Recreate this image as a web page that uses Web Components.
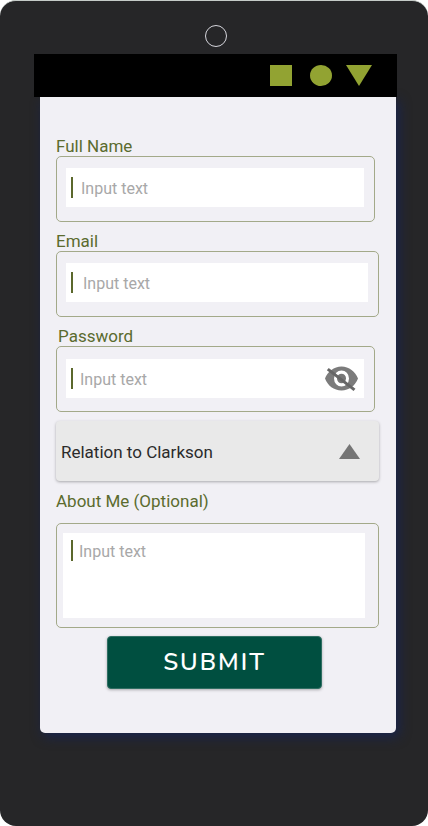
<!DOCTYPE html>
<html lang="en">
<head>
<meta charset="utf-8">
<meta name="viewport" content="width=device-width, initial-scale=1">
<title>Clarkson sign-up</title>
<style>
  html { background: #fff; }
  body { margin: 0; font-family: Roboto, "Liberation Sans", sans-serif; font-size: 16px; }
</style>
</head>
<body>
<device-frame>
  <status-bar slot="status"></status-bar>
  <signup-form>
    <text-field label="Full Name" name="name" class="narrow"></text-field>
    <text-field label="Email" name="email" type="email" class="roomy"></text-field>
    <text-field label="Password" name="password" type="password" class="narrow snug"></text-field>
    <relation-select label="Relation to Clarkson"></relation-select>
    <about-field label="About Me (Optional)"></about-field>
    <submit-button>SUBMIT</submit-button>
  </signup-form>
</device-frame>
<script>
const define = (name, html, setup) => customElements.define(name, class extends HTMLElement {
  connectedCallback() {
    if (this.shadowRoot) return;
    const root = this.attachShadow({ mode: 'open' });
    const t = document.createElement('template');
    t.innerHTML = html;
    root.append(t.content.cloneNode(true));
    if (setup) setup(this, root);
  }
});

define('device-frame', `
<style>
  :host { display: flex; flex-direction: column; box-sizing: border-box; min-height: 100vh;
    padding: 24px 31px 93px 34px; background: #262628; border-radius: 16px; border-top: 1px solid #c5cbc8; }
  .camera { box-sizing: border-box; width: 22px; height: 22px; margin: 0 auto 7px; border: 1px solid #d5d5dc; border-radius: 50%; }
  .screen { flex: 1; display: flex; flex-direction: column; margin: 0 1px 0 6px; background: #f1f0f5;
    border-radius: 0 0 5px 5px; box-shadow: 3px 4px 12px 0 #19244d; }
  ::slotted([slot=status]) { position: relative; }
</style>
<div class="camera"></div>
<slot name="status"></slot>
<div class="screen"><slot></slot></div>`);

define('status-bar', `
<style>
  :host { display: flex; align-items: center; justify-content: flex-end; height: 43px; padding-right: 25px; background: #000; }
  svg { display: block; fill: #92a332; }
  .round { margin: 0 14px 0 18px; }
</style>
<svg width="22" height="21" viewBox="0 0 22 21"><rect width="22" height="21"/></svg>
<svg class="round" width="22" height="21" viewBox="0 0 22 21"><ellipse cx="11" cy="10.5" rx="11" ry="10.5"/></svg>
<svg width="26" height="21" viewBox="0 0 26 21"><path d="M0 0H26L13 21Z"/></svg>`);

define('signup-form', `
<style>
  :host { display: block; }
  form { display: flex; flex-direction: column; padding: 39px 17px 44px 16px; }
  ::slotted(text-field) { margin-bottom: 9px; }
  ::slotted(.narrow) { margin-right: 4px; }
  ::slotted(.roomy) { --lead: 10px; }
  ::slotted(.snug) { --lead: 7px; --label-inset: 2px; --above: 12px; --below: 13px; }
</style>
<form><slot></slot></form>`);

const fieldStyle = `
  :host { display: block; }
  label { display: block; font-size: 17px; line-height: 20px; padding-left: var(--label-inset, 0); color: #5b6b2e; }
  .outline { border: 1px solid #a3a989; border-radius: 5px; }
  .box { display: flex; background: #fff; }
  .caret { flex: none; width: 2px; height: 21px; background: #5b682c; }
  input, textarea { flex: 1; min-width: 0; box-sizing: border-box; margin: 0; border: 0; outline: 0; background: none;
    font: inherit; color: #333; }
  ::placeholder { color: #a8a8a8; opacity: 1; }`;

define('text-field', `
<style>${fieldStyle}
  .outline { padding: var(--above, 11px) 10px var(--below, 14px) 9px; }
  .box { align-items: center; height: 39px; padding: 0 6px 0 5px; }
  input { height: 39px; padding: 2px 0 0 var(--lead, 8px); }
  button { flex: none; padding: 0; border: 0; background: none; cursor: pointer; }
  svg { display: block; }
</style>
<label for="field"></label>
<div class="outline"><div class="box"><span class="caret"></span><input id="field" placeholder="Input text"></div></div>`,
(host, root) => {
  const input = root.querySelector('input');
  root.querySelector('label').textContent = host.getAttribute('label');
  input.type = host.getAttribute('type') || 'text';
  input.name = host.getAttribute('name');
  if (input.type !== 'password') return;
  const eye = document.createElement('button');
  eye.type = 'button';
  eye.setAttribute('aria-label', 'Show password');
  eye.innerHTML = `<svg width="33" height="25" viewBox="0 0 33 26" preserveAspectRatio="none">
    <path fill="#7b7b7b" fill-rule="evenodd" d="M16.5 .5C9 .5 2.6 5.7 0 13c2.6 7.3 9 12.5 16.5 12.5S30.4 20.3 33 13C30.4 5.7 24 .5 16.5 .5Zm0 20.8a7.5 8.3 0 1 1 0-16.6a7.5 8.3 0 0 1 0 16.6Z"/>
    <ellipse cx="16.5" cy="13" rx="4.5" ry="5" fill="#777"/>
    <path d="M2.8 3.3L29.5 24.8" stroke="#666" stroke-width="3"/></svg>`;
  eye.onclick = () => { input.type = input.type === 'password' ? 'text' : 'password'; };
  root.querySelector('.box').append(eye);
});

define('relation-select', `
<style>
  :host { display: grid; align-items: center; height: 60px; margin-bottom: 10px; background: #e9e9e9; border-radius: 4px;
    box-shadow: 0 1px 3px rgba(0,0,0,.3); }
  select, svg { grid-area: 1 / 1; }
  select { appearance: none; width: 100%; height: 60px; margin: 0; padding: 2px 48px 0 5px; border: 0; background: none;
    font: inherit; font-size: 17px; color: #2b2b2b; }
  svg { justify-self: end; margin-right: 19px; pointer-events: none; }
</style>
<select><option></option></select>
<svg width="21" height="15" viewBox="0 0 21 15"><path fill="#757575" d="M10.5 0L21 15H0Z"/></svg>`,
(host, root) => {
  const select = root.querySelector('select');
  select.setAttribute('aria-label', host.getAttribute('label'));
  select.options[0].textContent = host.getAttribute('label');
});

define('about-field', `
<style>${fieldStyle}
  :host { margin-bottom: 8px; }
  label { margin-bottom: 12px; }
  .outline { padding: 9px 13px 9px 6px; }
  .box { height: 85px; }
  .caret { margin: 7px 0 0 8px; }
  textarea { height: 85px; padding: 9px 6px 0 6px; line-height: 19px; resize: none; }
</style>
<label for="field"></label>
<div class="outline"><div class="box"><span class="caret"></span><textarea id="field" placeholder="Input text"></textarea></div></div>`,
(host, root) => { root.querySelector('label').textContent = host.getAttribute('label'); });

define('submit-button', `
<style>
  :host { display: flex; padding: 0 57px 0 51px; }
  button { flex: 1; height: 53px; margin: 0; padding: 0 0 2px; border: 1px solid #2f6e62; border-radius: 4px; background: #004f40;
    color: #fff; font: 600 24px/28px Nunito, "Noto Sans", sans-serif; letter-spacing: 2px; cursor: pointer;
    box-shadow: 0 1px 3px rgba(0,0,0,.3); }
</style>
<button type="submit"><slot></slot></button>`);
</script>
</body>
</html>
